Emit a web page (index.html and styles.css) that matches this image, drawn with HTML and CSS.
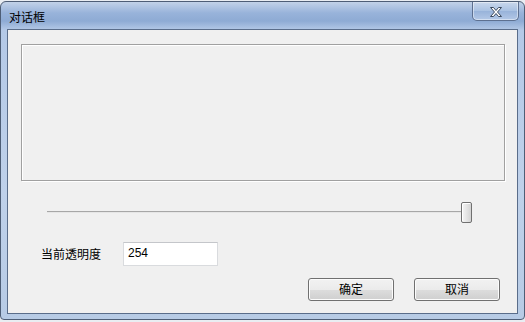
FILE: index.html
```html
<!DOCTYPE html>
<html lang="zh-CN">
<head>
<meta charset="utf-8">
<title>对话框</title>
<link rel="stylesheet" href="styles.css">
</head>
<body>
<div class="window">
  <div class="titlebar">
    <span class="title">对话框</span>
    <div class="close">
      <svg width="16" height="12" viewBox="0 0 16 12"><path d="M2.5 1.5h3l2.5 3 2.5-3h3l-4 4.5 4 4.5h-3l-2.5-3-2.5 3h-3l4-4.5z" fill="#fff" stroke="#3c4a5e" stroke-width="1" stroke-linejoin="round"/></svg>
    </div>
  </div>
  <div class="client">
    <div class="groupbox"></div>
    <div class="slider">
      <div class="track"></div>
      <div class="thumb"></div>
    </div>
    <div class="row">
      <span class="label">当前透明度</span>
      <div class="edit">254</div>
    </div>
    <div class="buttons">
      <div class="btn">确定</div>
      <div class="btn">取消</div>
    </div>
  </div>
</div>
</body>
</html>
```
FILE: styles.css
```css
html, body {
  margin: 0;
  padding: 0;
  background: #e9edf2;
  font-family: "Noto Sans CJK SC", "Liberation Sans", sans-serif;
  font-size: 12px;
  color: #000;
}
.window {
  box-sizing: border-box;
  width: 525px;
  height: 319px;
  margin-top: 1px;
  border: 1px solid #4e5e76;
  border-radius: 6px 6px 4px 4px;
  background: linear-gradient(to bottom, #c2d2e8 0px, #98b3da 11px, #8eabd4 19px, #b4c9e7 28px, #bfd1ea 60%, #b7cbe5 100%);
  display: flex;
  flex-direction: column;
  padding: 0 6px 5px 6px;
}
.titlebar {
  height: 27px;
  display: flex;
  align-items: flex-start;
  margin: 0 -6px 0 0;
}
.title {
  padding-top: 7px;
  padding-left: 2px;
  line-height: 16px;
  color: #000;
}
.close {
  margin-left: auto;
  margin-right: 5px;
  box-sizing: border-box;
  width: 47px;
  height: 19px;
  border: 1px solid #5d7090;
  border-top: none;
  border-radius: 0 0 5px 5px;
  background: linear-gradient(to bottom, #c9d8ec, #a9c1e2 50%, #98b3da 51%, #b3c8e6);
  box-shadow: inset 0 0 0 1px rgba(255,255,255,0.45);
  display: flex;
  align-items: center;
  justify-content: center;
}
.close svg { display: block; margin-top: 1px; }
.client {
  box-sizing: border-box;
  height: 286px;
  border: 1px solid #5a6d8a;
  background: #f0f0f0;
  padding: 14px 12px 0 13px;
  display: flex;
  flex-direction: column;
}
.groupbox {
  box-sizing: border-box;
  height: 137px;
  border: 1px solid #a0a0a0;
  box-shadow: inset 1px 1px 0 #fff, 1px 1px 0 #fff;
}
.slider {
  position: relative;
  height: 21px;
  margin-top: 21px;
  margin-left: 26px;
  width: 425px;
}
.track {
  position: absolute;
  left: 0;
  top: 9px;
  width: 419px;
  height: 1px;
  background: #a7a7a7;
  border-bottom: 1px solid #e6e6e6;
}
.thumb {
  position: absolute;
  left: 414px;
  top: 0;
  box-sizing: border-box;
  width: 11px;
  height: 21px;
  border: 1px solid #707070;
  border-radius: 2px;
  background: linear-gradient(to right, #f6f6f6, #e2e2e2 60%, #d3d3d3);
  box-shadow: inset 1px 1px 0 #fff;
}
.row {
  display: flex;
  align-items: center;
  margin-top: 19px;
  height: 24px;
}
.label {
  margin-left: 20px;
  width: 82px;
  line-height: 16px;
}
.edit {
  box-sizing: border-box;
  width: 95px;
  height: 24px;
  background: #fff;
  border: 1px solid #d9dbde;
  border-top-color: #c4c6ca;
  padding-left: 4px;
  font-family: "Liberation Sans", sans-serif;
  font-size: 12px;
  line-height: 20px;
}
.buttons {
  display: flex;
  justify-content: flex-end;
  gap: 20px;
  margin-top: 12px;
  padding-right: 5px;
}
.btn {
  box-sizing: border-box;
  width: 86px;
  height: 23px;
  border: 1px solid #707070;
  border-radius: 3px;
  background: linear-gradient(to bottom, #f2f2f2 0%, #ebebeb 50%, #dddddd 51%, #cfcfcf 100%);
  box-shadow: inset 0 0 0 1px #fcfcfc;
  text-align: center;
  line-height: 20px;
}
```
